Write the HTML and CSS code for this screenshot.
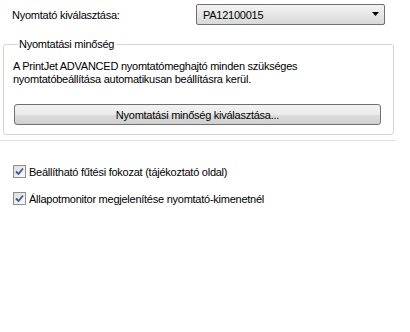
FILE: index.html
```html
<!DOCTYPE html>
<html lang="hu">
<head>
    <meta charset="UTF-8">
    <title>Nyomtató beállítások</title>
    <link rel="stylesheet" href="styles.css">
</head>
<body>
    <div class="panel">
        <div class="printer-row">
            <label class="printer-label" for="printer">Nyomtató kiválasztása:</label>
            <div class="combo" id="printer">
                <span class="combo-value">PA12100015</span>
                <span class="combo-arrow">
                    <svg width="9" height="5" viewBox="0 0 9 5"><path d="M1 0 L8 0 L4.5 4 Z" fill="#000"/></svg>
                </span>
            </div>
        </div>

        <fieldset class="quality">
            <legend>Nyomtatási minőség</legend>
            <p class="quality-text">A PrintJet ADVANCED nyomtatómeghajtó minden szükséges<br>nyomtatóbeállítása automatikusan beállításra kerül.</p>
            <button class="quality-btn" type="button">Nyomtatási minőség kiválasztása...</button>
        </fieldset>
        <div class="separator"></div>

        <div class="options">
            <label class="check-row">
                <span class="checkbox"><svg width="9" height="9" viewBox="0 0 9 9"><path d="M1 4.5 L3.5 7 L8 1.5" fill="none" stroke="#3b5a9a" stroke-width="1.8"/></svg></span>
                Beállítható fűtési fokozat (tájékoztató oldal)
            </label>
            <label class="check-row">
                <span class="checkbox"><svg width="9" height="9" viewBox="0 0 9 9"><path d="M1 4.5 L3.5 7 L8 1.5" fill="none" stroke="#3b5a9a" stroke-width="1.8"/></svg></span>
                Állapotmonitor megjelenítése nyomtató-kimenetnél
            </label>
        </div>
    </div>
</body>
</html>
```

FILE: styles.css
```css
body {
    margin: 0;
    background-color: #ffffff;
    color: #000;
    font-family: "Liberation Sans", Arial, sans-serif;
    font-size: 11px;
    letter-spacing: -0.25px;
}

.panel {
    width: 410px;
    height: 332px;
}

.printer-row {
    display: flex;
    align-items: center;
    padding: 4px 0 0 12px;
    height: 21px;
}

.printer-label {
    width: 184px;
}

.combo {
    display: flex;
    align-items: center;
    justify-content: space-between;
    width: 181px;
    height: 19px;
    border: 1px solid #707070;
    border-radius: 2px;
    background: linear-gradient(#f4f4f4, #e6e6e6 50%, #d8d8d8);
    padding-left: 6px;
    box-sizing: content-box;
}

.combo-arrow {
    display: flex;
    align-items: center;
    justify-content: center;
    width: 17px;
    height: 19px;
}

.quality {
    margin: 13px 0 0 3px;
    width: 391px;
    height: 97px;
    box-sizing: border-box;
    border: 1px solid #d5d5d5;
    border-radius: 3px;
    padding: 0 12px 0 10px;
}

.quality legend {
    padding: 0 2px 0 1px;
    margin-left: 4px;
    line-height: 13px;
}

.quality-text {
    margin: 9px 0 0 -1px;
    line-height: 13px;
}

.quality-btn {
    display: block;
    margin: 18px 0 0 0;
    width: 367px;
    height: 21px;
    border: 1px solid #707070;
    border-radius: 3px;
    background: linear-gradient(#f2f2f2, #ebebeb 50%, #dddddd 51%, #cfcfcf);
    font-family: inherit;
    font-size: 11px;
    letter-spacing: -0.25px;
    color: #000;
    padding: 0;
}

.separator {
    margin-top: 5px;
    width: 396px;
    height: 0;
    border-bottom: 1px solid #e3e3e3;
}

.options {
    display: flex;
    flex-direction: column;
    gap: 14px;
    padding: 24px 0 0 13px;
}

.check-row {
    display: flex;
    align-items: center;
    gap: 3px;
    height: 13px;
}

.checkbox {
    display: flex;
    align-items: center;
    justify-content: center;
    width: 11px;
    height: 11px;
    border: 1px solid #8e8f8f;
    background: linear-gradient(135deg, #dcdcdc, #fbfbfb);
}
```
